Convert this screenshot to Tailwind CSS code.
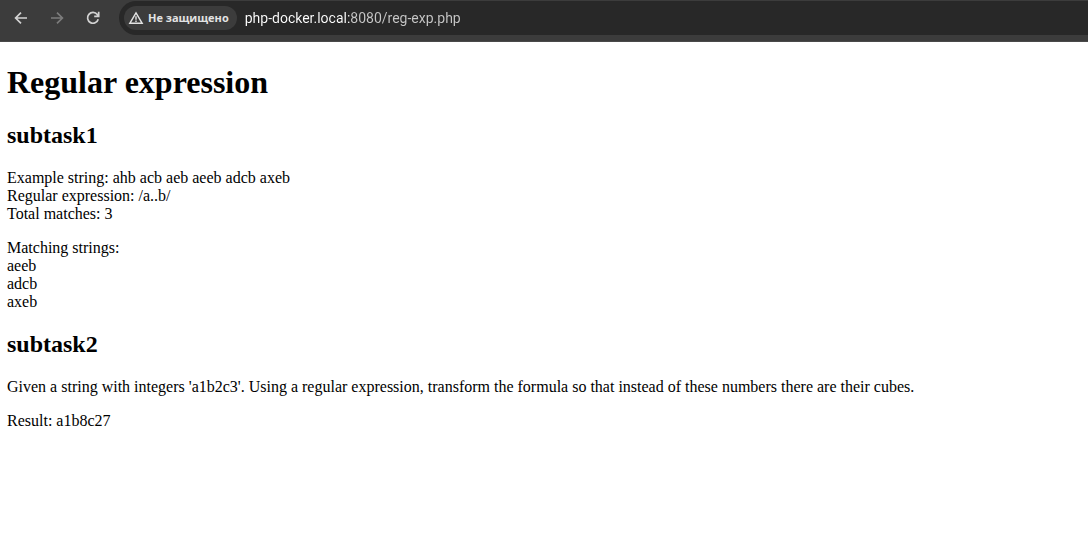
<!DOCTYPE html>
<html lang="en">
<head>
<meta charset="utf-8">
<meta name="viewport" content="width=device-width, initial-scale=1">
<title>Regular expression</title>
<script src="https://cdn.jsdelivr.net/npm/@tailwindcss/browser@4"></script>
</head>
<body class="min-h-screen bg-white text-black">
<header class="flex h-[42px] items-start border-b border-[#4a4a4a] bg-[#3c3c3c] pt-px pl-[11px] font-['Open_Sans',sans-serif]">
  <nav class="flex h-[34px] items-center gap-4" aria-label="Navigation">
    <button type="button" aria-label="Back" class="flex size-5 items-center justify-center text-[#d2d2d2]">
      <svg class="size-4" viewBox="0 0 16 16" fill="none" stroke="currentColor" stroke-width="1.7"><path d="M14 8H3M8 2.6 2.6 8 8 13.4"/></svg>
    </button>
    <button type="button" aria-label="Forward" class="flex size-5 items-center justify-center text-[#7c7c7c]">
      <svg class="size-4" viewBox="0 0 16 16" fill="none" stroke="currentColor" stroke-width="1.7"><path d="M2 8h11M8 2.6 13.4 8 8 13.4"/></svg>
    </button>
    <button type="button" aria-label="Reload" class="flex size-5 items-center justify-center text-[#d2d2d2]">
      <svg class="size-4" viewBox="0 0 16 16" fill="none" stroke="currentColor" stroke-width="1.7"><path d="M13.2 9.2A5.4 5.4 0 1 1 12.3 4.6L13.5 6M13.7 1.8V6.3H9.2"/></svg>
    </button>
  </nav>
  <div class="ml-4 flex h-[34px] min-w-0 flex-1 items-center gap-2 rounded-l-full bg-[#282828] pl-[5px]">
    <button type="button" class="flex h-6 shrink-0 items-center gap-1 rounded-full bg-[#3c3c3c] pr-2 pl-1 text-[11px] font-bold text-[#e3e3e3]">
      <svg class="h-4 w-4" viewBox="0 0 16 16" fill="none" stroke="currentColor" stroke-width="1.4" aria-hidden="true"><path d="M8 2.8 14.2 13.3H1.8Z"/><path d="M8 6.2v3.6M8 10.6v1.4"/></svg>
      <span>Не защищено</span>
    </button>
    <input type="text" aria-label="Address" value="php-docker.local:8080/reg-exp.php" class="min-w-0 flex-1 bg-[linear-gradient(90deg,#ffffff_105px,#c7c7c7_105px)] bg-clip-text font-['Roboto',sans-serif] text-[14px] leading-5 text-transparent outline-none">
  </div>
</header>
<main class="px-[7px] pt-[22px] pb-4 font-['Liberation_Serif',serif] text-[16px] leading-[18px]">
  <h1 class="text-[32px] leading-9 font-bold">Regular expression</h1>
  <section>
    <h2 class="mt-[22px] text-[24px] leading-[27px] font-bold">subtask1</h2>
    <p class="mt-5">Example string: ahb acb aeb aeeb adcb axeb<br>Regular expression: /a..b/<br>Total matches: 3</p>
    <p class="mt-4">Matching strings:<br>aeeb<br>adcb<br>axeb</p>
  </section>
  <section>
    <h2 class="mt-5 text-[24px] leading-[27px] font-bold">subtask2</h2>
    <p class="mt-5">Given a string with integers 'a1b2c3'. Using a regular expression, transform the formula so that instead of these numbers there are their cubes.</p>
    <p class="mt-4">Result: a1b8c27</p>
  </section>
</main>
</body>
</html>
